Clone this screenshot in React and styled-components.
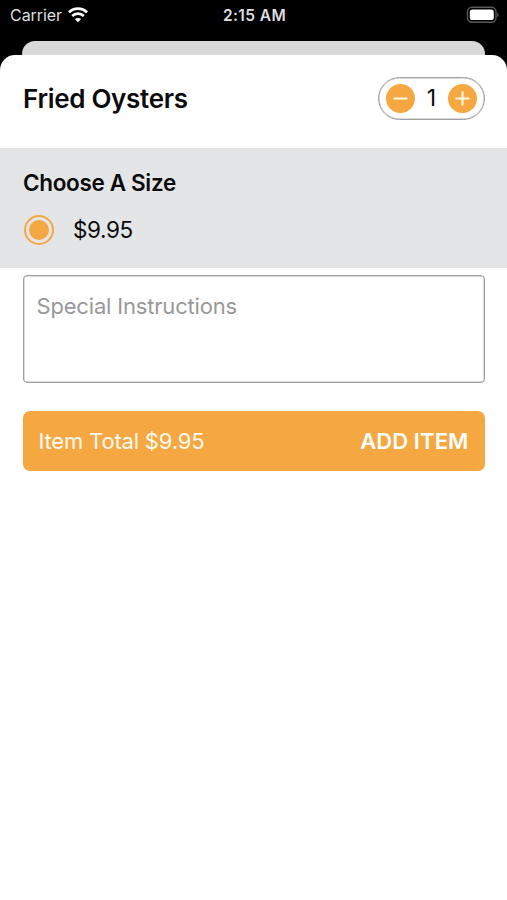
import React, { useState } from "react";
import styled, { createGlobalStyle } from "styled-components";

const ORANGE = "#f5a841";

const GlobalStyle = createGlobalStyle`
  * { box-sizing: border-box; }
  body {
    margin: 0;
    background: #000;
    font-family: Inter, "Liberation Sans", sans-serif;
    color: #0b0b0b;
  }
  button, textarea { font: inherit; color: inherit; margin: 0; }
`;

const Screen = styled.div`
  height: 900px;
  display: flex;
  flex-direction: column;
  overflow: hidden;
`;

const StatusBar = styled.header`
  height: 41px;
  flex: none;
  padding: 0 8px 11px 10px;
  display: grid;
  grid-template-columns: 1fr auto 1fr;
  align-items: center;
  color: #dedede;
  font-size: 16px;
  line-height: 20px;
`;

const Carrier = styled.div`
  display: flex;
  align-items: center;
  gap: 6px;
  letter-spacing: -0.05px;
`;

const Clock = styled.time`
  padding-top: 1px;
  font-size: 15.5px;
  font-weight: 600;
  letter-spacing: 0.4px;
`;

const BatterySlot = styled.div`
  display: flex;
  justify-content: flex-end;
`;

const BackSheet = styled.div`
  flex: none;
  height: 14px;
  margin: 0 22px;
  border-radius: 13px 13px 0 0;
  background: #d9d9d9;
`;

const Sheet = styled.main`
  flex: 1;
  background: #fff;
  border-radius: 15px 15px 0 0;
`;

const ItemHeader = styled.div`
  height: 93px;
  padding: 0 22px 7px 23px;
  display: flex;
  align-items: center;
  justify-content: space-between;
`;

const ItemName = styled.h1`
  margin: 1px 0 0;
  font-size: 26px;
  line-height: 32px;
  font-weight: 600;
  letter-spacing: -0.3px;
`;

const Stepper = styled.div`
  width: 107px;
  height: 43px;
  padding: 0 6.5px;
  border: 1px solid #a0a0a0;
  box-shadow: inset 0 0 0 0.5px #b8b8b8;
  border-radius: 22px;
  display: flex;
  align-items: center;
  justify-content: space-between;
`;

const StepButton = styled.button`
  width: 29px;
  height: 29px;
  padding: 0;
  border: 0;
  border-radius: 50%;
  background: ${ORANGE};
  display: grid;
  place-items: center;
`;

const Quantity = styled.span`
  font-size: 23px;
  line-height: 28px;
`;

const SizeSection = styled.section`
  height: 120px;
  padding: 20px 23px 0 24px;
  background: #e3e5e6;
`;

const SectionTitle = styled.h2`
  margin: 0 0 17px -1px;
  font-size: 22.5px;
  line-height: 30px;
  font-weight: 600;
  letter-spacing: -0.34px;
`;

const SizeOption = styled.div`
  height: 30px;
  display: flex;
  align-items: center;
  gap: 19px;
  font-size: 22.5px;
  line-height: 30px;
  letter-spacing: -0.4px;
`;

const Radio = styled.span`
  width: 30px;
  height: 30px;
  border: 2px solid ${ORANGE};
  border-radius: 50%;
  display: grid;
  place-items: center;

  &::after {
    content: "";
    width: 20px;
    height: 20px;
    border-radius: 50%;
    background: ${ORANGE};
  }
`;

const Instructions = styled.textarea`
  display: block;
  width: calc(100% - 45px);
  height: 107.5px;
  margin: 7px 22px 0.5px 22.5px;
  padding: 15px 13px;
  border: 1px solid #a0a0a0;
  box-shadow: inset 0 0 0 0.5px #b8b8b8;
  border-radius: 4px;
  background: #fff;
  resize: none;
  outline: none;
  font-size: 22px;
  line-height: 30px;
  letter-spacing: -0.18px;

  &::placeholder { color: #999; opacity: 1; }
`;

const AddButton = styled.button`
  width: calc(100% - 45px);
  height: 60px;
  margin: 28px 22px 0 22.5px;
  padding: 0 16px;
  border: 0;
  border-radius: 7px;
  background: ${ORANGE};
  color: #fffaf0;
  display: flex;
  align-items: center;
  justify-content: space-between;
  font-size: 22px;
  line-height: 30px;
`;

const ButtonTotal = styled.span`
  letter-spacing: -0.18px;
`;

const ButtonAction = styled.span`
  font-weight: 600;
  letter-spacing: 0.1px;
  color: #fff;
`;

function WifiIcon() {
  return (
    <svg width="20" height="16" viewBox="0 0 20 16" fill="none" stroke="#fff" strokeWidth="2.7">
      <path d="M0.9 5.4C6 .3 14 .3 19.1 5.4" />
      <path d="M4.2 9C7.5 5.9 12.5 5.9 15.8 9" />
      <path d="M10 15.2L6.9 12.1C8.6 10.5 11.4 10.5 13.1 12.1Z" fill="#fff" stroke="none" />
    </svg>
  );
}

function BatteryIcon() {
  return (
    <svg width="33" height="18" viewBox="0 0 33 18">
      <rect x="1.5" y="1.3" width="28.5" height="15" rx="4.5" fill="none" stroke="#59595b" strokeWidth="1.4" />
      <rect x="3.8" y="3.5" width="24" height="10.6" rx="2.7" fill="#fff" />
      <path d="M31.3 6.5C33 7.2 33 10.4 31.3 11.1Z" fill="#59595b" />
    </svg>
  );
}

function StepIcon({ plus }) {
  return (
    <svg width="15" height="15" viewBox="0 0 15 15" stroke="#fff8e8" strokeWidth="2.2" strokeLinecap="round">
      <path d="M1.4 7.5H13.6" />
      {plus && <path d="M7.5 1.4V13.6" />}
    </svg>
  );
}

export default function App() {
  const [quantity, setQuantity] = useState(1);
  const total = (quantity * 9.95).toFixed(2);

  return (
    <Screen>
      <GlobalStyle />
      <StatusBar>
        <Carrier>Carrier <WifiIcon /></Carrier>
        <Clock>2:15 AM</Clock>
        <BatterySlot><BatteryIcon /></BatterySlot>
      </StatusBar>
      <BackSheet />
      <Sheet>
        <ItemHeader>
          <ItemName>Fried Oysters</ItemName>
          <Stepper>
            <StepButton aria-label="Decrease" onClick={() => setQuantity(Math.max(1, quantity - 1))}>
              <StepIcon />
            </StepButton>
            <Quantity>{quantity}</Quantity>
            <StepButton aria-label="Increase" onClick={() => setQuantity(quantity + 1)}>
              <StepIcon plus />
            </StepButton>
          </Stepper>
        </ItemHeader>
        <SizeSection>
          <SectionTitle>Choose A Size</SectionTitle>
          <SizeOption>
            <Radio />
            <span>$9.95</span>
          </SizeOption>
        </SizeSection>
        <Instructions placeholder="Special Instructions" />
        <AddButton>
          <ButtonTotal>Item Total ${total}</ButtonTotal>
          <ButtonAction>ADD ITEM</ButtonAction>
        </AddButton>
      </Sheet>
    </Screen>
  );
}
